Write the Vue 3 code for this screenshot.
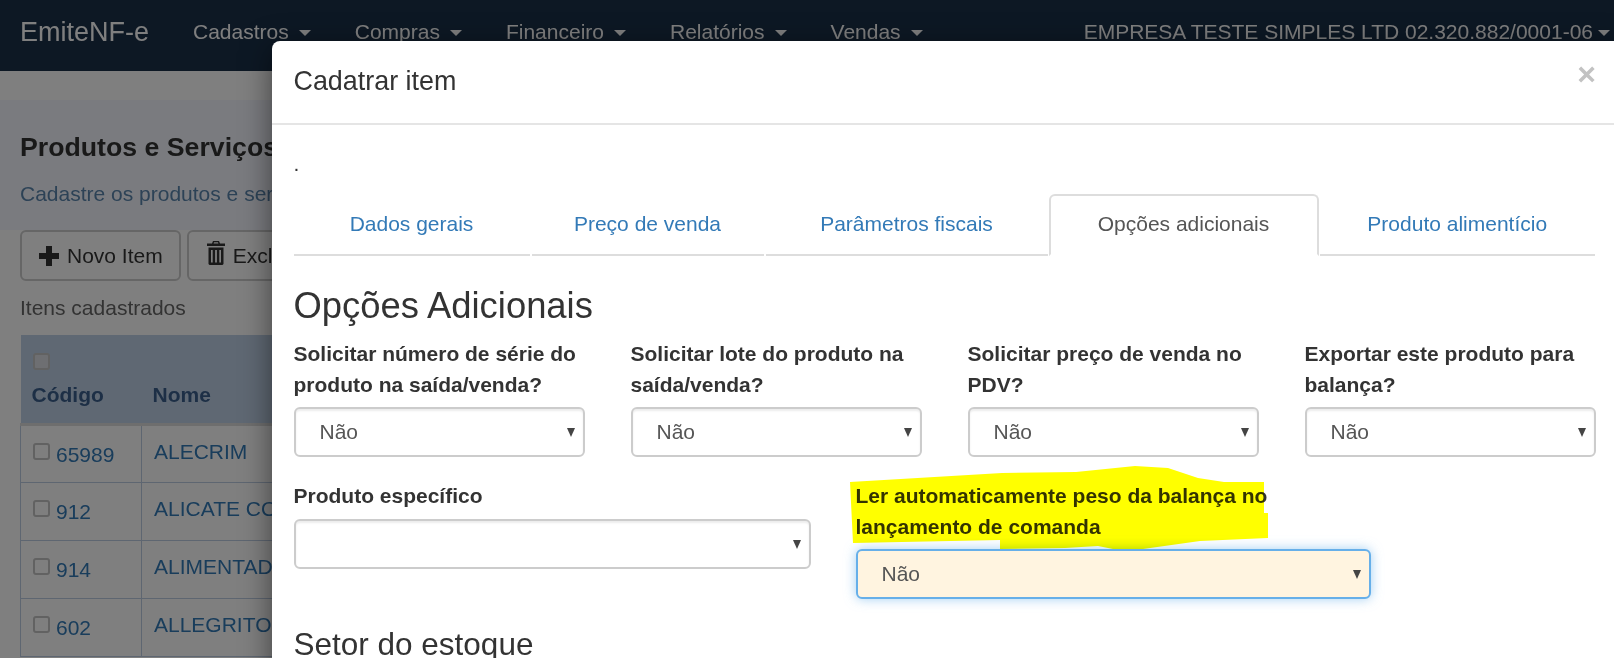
<script setup>
const navItems = ['Cadastros', 'Compras', 'Financeiro', 'Relatórios', 'Vendas']
const rows = [
  { code: '65989', name: 'ALECRIM' },
  { code: '912', name: 'ALICATE COM' },
  { code: '914', name: 'ALIMENTADOR' },
  { code: '602', name: 'ALLEGRITO' },
]
const tabs = [
  { label: 'Dados gerais' },
  { label: 'Preço de venda' },
  { label: 'Parâmetros fiscais' },
  { label: 'Opções adicionais', active: true },
  { label: 'Produto alimentício' },
]
const questions = [
  'Solicitar número de série do produto na saída/venda?',
  'Solicitar lote do produto na saída/venda?',
  'Solicitar preço de venda no PDV?',
  'Exportar este produto para balança?',
]
</script>

<template>
  <div class="page">
    <nav class="nav">
      <a class="brand">EmiteNF-e</a>
      <a v-for="item in navItems" :key="item" class="nav-item">{{ item }}<i class="caret"></i></a>
      <a class="company">EMPRESA TESTE SIMPLES LTD 02.320.882/0001-06<i class="caret small"></i></a>
    </nav>

    <header class="band">
      <h2>Produtos e Serviços</h2>
      <p>Cadastre os produtos e serviços</p>
    </header>

    <section class="content">
      <div class="buttons">
        <button class="btn">
          <svg class="ico" viewBox="0 0 20 20"><path d="M7 0h6v7h7v6h-7v7h-6v-7h-7v-6h7z" /></svg>
          Novo Item
        </button>
        <button class="btn second">
          <svg class="ico trash" viewBox="0 0 18 24">
            <path d="M6 0h6l1 2.500h5v2.500h-18v-2.500h5zM7 1.200l-.4 1.300h4.800l-.4-1.300z" />
            <path d="M1.500 6.500h15v16.500l-1 1h-13l-1-1zM4 9v12.500h1.700v-12.500zM8.100 9v12.500h1.800v-12.500zM12.300 9v12.500h1.700v-12.500z" fill-rule="evenodd" />
          </svg>
          Excluir
        </button>
      </div>
      <p class="caption">Itens cadastrados</p>
      <table class="grid">
        <colgroup><col class="c1" /><col /></colgroup>
        <thead>
          <tr>
            <th><input type="checkbox" class="chk head-chk" /><div>Código</div></th>
            <th class="bottom">Nome</th>
          </tr>
        </thead>
        <tbody>
          <tr v-for="r in rows" :key="r.code">
            <td><div class="code"><input type="checkbox" class="chk" /><a>{{ r.code }}</a></div></td>
            <td class="name"><a>{{ r.name }}</a></td>
          </tr>
        </tbody>
      </table>
    </section>

    <div class="backdrop"></div>

    <div class="modal">
      <div class="modal-head">
        <h4>Cadatrar item</h4>
        <span class="close">×</span>
      </div>
      <div class="modal-body">
        <p class="dot">.</p>
        <ul class="tabs">
          <li v-for="t in tabs" :key="t.label" :class="{ active: t.active }">{{ t.label }}</li>
        </ul>
        <h3 class="title">Opções Adicionais</h3>
        <div class="four">
          <div v-for="q in questions" :key="q" class="field">
            <label>{{ q }}</label>
            <div class="select">Não</div>
          </div>
        </div>
        <div class="two">
          <div class="field">
            <label>Produto específico</label>
            <div class="select"></div>
          </div>
          <div class="field">
            <label>Ler automaticamente peso da balança no lançamento de comanda</label>
            <div class="select focus">Não</div>
          </div>
        </div>
        <h3 class="title setor">Setor do estoque</h3>
      </div>
      <svg class="marker" viewBox="0 0 420 90" width="420" height="90">
        <path d="M0 18 L152 9 L226 8 L285 2 L318 4 L348 14 L374 18 L414 18 L414 49 L418 49 L418 74 L350 77 L293 85 L263 85 L248 82 L215 84 L150 85 L150 76 L3 79 Z" />
      </svg>
    </div>
  </div>
</template>

<style>
html, body { margin: 0; padding: 0; background: #fff; }
</style>

<style scoped>
.page {
  position: relative;
  width: 1614px;
  height: 658px;
  overflow: hidden;
  background: #fff;
  font-family: "Liberation Sans", Arial, sans-serif;
  font-size: 21px;
  line-height: 30px;
  color: #333;
}

/* navbar */
.nav {
  display: flex;
  align-items: flex-start;
  height: 71px;
  box-sizing: border-box;
  padding-top: 17px;
  background: #1b3048;
  color: #fff;
}
.brand { font-size: 27px; padding: 0 22px 0 20px; color: #fff; }
.nav-item { padding: 0 22px; }
.caret {
  display: inline-block;
  width: 0;
  height: 0;
  margin-left: 10px;
  vertical-align: 3px;
  border-top: 6px solid currentColor;
  border-left: 6px solid transparent;
  border-right: 6px solid transparent;
}
.caret.small { margin-left: 5px; }
.company { margin-left: auto; padding-right: 4px; white-space: nowrap; }

/* page behind the dialog */
.band {
  margin-top: 29px;
  height: 130px;
  box-sizing: border-box;
  padding: 30px 20px 0;
  background: #f4f7fe;
}
.band h2 { margin: 0; font-size: 26.7px; line-height: 34px; color: #333; }
.band p { margin: 15px 0 0; color: #5a85ad; }

.content { padding: 0 20px; }
.buttons { display: flex; gap: 6px; }
.btn {
  display: flex;
  align-items: center;
  gap: 8px;
  height: 51px;
  padding: 0 16px 0 17px;
  border: 2px solid #ccc;
  border-radius: 6px;
  background: #fff;
  font: inherit;
  color: #333;
}
.btn.second { padding-left: 18px; }
.ico { width: 20px; height: 20px; fill: #333; }
.ico.trash { width: 18px; height: 24px; margin-top: -6px; }
.caption { margin: 12px 0 12px; color: #666; }

.grid { width: 1574px; table-layout: fixed; border-collapse: collapse; }
.c1 { width: 121px; }
.grid th {
  height: 89px;
  box-sizing: border-box;
  padding: 0 12px 13px 11px;
  text-align: left;
  vertical-align: bottom;
  background: #bed1e7;
  color: #3b5f8c;
  border-bottom: 3px solid #ddd;
}
.chk {
  appearance: none;
  width: 17px;
  height: 17px;
  box-sizing: border-box;
  margin: 3px 6px 0 0;
  flex: none;
  background: #fff;
  border: 2px solid #c4c4c4;
  border-radius: 3px;
}
.head-chk { display: block; margin: 0 0 10px 1px; background: #dcdfe4; }
.grid td {
  height: 58px;
  box-sizing: border-box;
  padding: 14px 12px 0;
  vertical-align: top;
  border: 1px solid #bccde2;
  color: #337ab7;
}
.grid td.name { padding-top: 11px; white-space: nowrap; }
.code { display: flex; align-items: flex-start; }

.backdrop {
  position: absolute;
  inset: 0;
  background: rgba(0, 0, 0, 0.5);
}

/* dialog */
.modal {
  position: absolute;
  top: 41px;
  left: 272px;
  width: 1350px;
  height: 640px;
  background: #fff;
  border-radius: 8px;
  box-shadow: 0 7px 30px rgba(0, 0, 0, 0.5);
}
.modal-head {
  position: relative;
  height: 82px;
  border-bottom: 2px solid #e5e5e5;
  padding: 0 21.500px;
}
.modal-head h4 {
  margin: 0;
  padding-top: 22px;
  font-size: 26.9px;
  font-weight: 400;
  line-height: 37px;
  color: #333;
}
.close {
  position: absolute;
  top: 15px;
  right: 26px;
  font-size: 32px;
  font-weight: 700;
  line-height: 37px;
  color: #c2c2c2;
}
.modal-body { padding: 0 21.500px; }
.dot { margin: 0; padding-top: 24px; height: 45px; line-height: 30px; }

.tabs {
  display: grid;
  grid-template-columns: 236px 232px 282px 268px 275.500px;
  column-gap: 2px;
  width: 1301.500px;
  margin: 0;
  padding: 0;
  list-style: none;
}
.tabs li {
  height: 62px;
  box-sizing: border-box;
  padding-top: 15px;
  text-align: center;
  color: #337ab7;
  border-bottom: 2px solid #ddd;
  border-radius: 6px 6px 0 0;
}
.tabs li.active {
  color: #555;
  margin: 0 -1px;
  border: 2px solid #ddd;
  border-bottom-color: #fff;
  padding-top: 13px;
}

.title {
  margin: 0;
  padding-top: 26px;
  font-size: 36.4px;
  font-weight: 400;
  line-height: 48px;
  color: #333;
}
.four {
  display: grid;
  grid-template-columns: repeat(4, 291.500px);
  column-gap: 45.500px;
  margin-top: 9px;
}
.two {
  display: grid;
  grid-template-columns: 517.500px 515px;
  column-gap: 44.500px;
  align-items: start;
  margin-top: 24px;
}
.field label {
  display: block;
  font-weight: 700;
  line-height: 30.5px;
  margin-bottom: 7px;
  color: #333;
}
.select {
  position: relative;
  height: 50px;
  box-sizing: border-box;
  padding: 8px 24px;
  border: 2px solid #ccc;
  border-radius: 6px;
  background: #fff;
  box-shadow: inset 0 2px 2px rgba(0, 0, 0, 0.075);
  color: #555;
  line-height: 30px;
}
.select::after {
  content: "";
  position: absolute;
  top: 19px;
  right: 8px;
  border-top: 9px solid #444;
  border-left: 4.500px solid transparent;
  border-right: 4.500px solid transparent;
}
.select.focus {
  border-color: #66afe9;
  background: #fff4e0;
  box-shadow: 0 0 12px rgba(102, 175, 233, 0.6);
}
.setor { padding-top: 21px; font-size: 31.5px; }

/* hand-drawn highlighter over the second label */
.marker {
  position: absolute;
  top: 423px;
  left: 578px;
  mix-blend-mode: multiply;
  pointer-events: none;
}
.marker path { fill: #ffff00; }
</style>
